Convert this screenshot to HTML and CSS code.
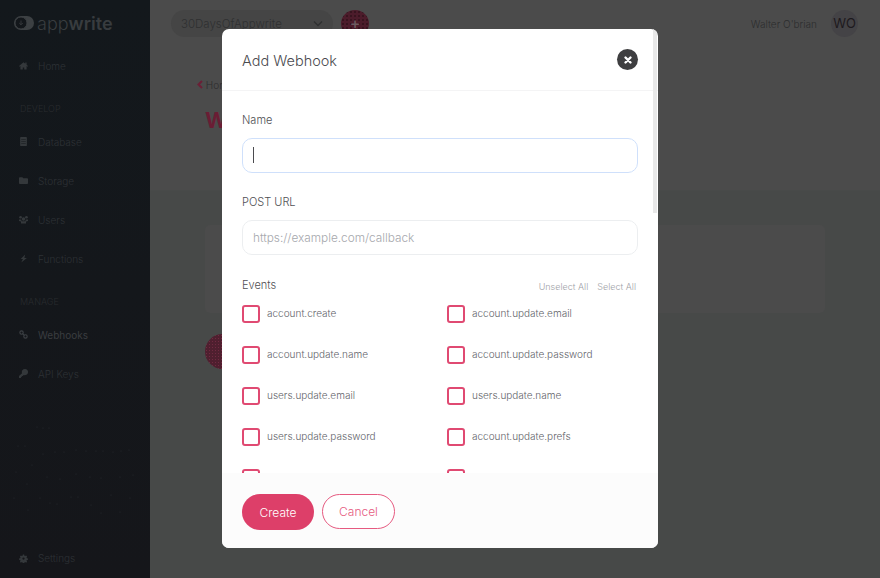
FILE: index.html
```html
<!DOCTYPE html>
<html lang="en">
<head>
    <meta charset="UTF-8">
    <meta name="viewport" content="width=device-width, initial-scale=1.0">
    <title>Webhooks - Appwrite</title>
    <link rel="stylesheet" href="styles.css">
</head>
<body>
    <aside class="sidebar">
        <div class="logo">
            <svg class="logo-mark" width="20" height="14" viewBox="0 0 20 14"><rect x="0" y="0" width="20" height="14" rx="7" fill="#3c4043"/><circle cx="7" cy="7" r="6" fill="#13171b" stroke="#3c4043"/><path d="M7 4.500v4M5.200 7l1.800 1.800L8.800 7" fill="none" stroke="#3c4043" stroke-width=".8"/></svg>
            <span>app<b>write</b></span>
        </div>
        <nav class="nav">
            <a class="nav-item"><svg viewBox="0 0 16 16"><path d="M8 2 0 9l1 1.200 1.500-1.200v6h4.200v-3.500h2.600V15h4.200V9l1.500 1.200L16 9l-2.500-2.200V2.500h-2.300v2.300z"/></svg>Home</a>
            <div class="nav-title">DEVELOP</div>
            <a class="nav-item"><svg viewBox="0 0 16 16"><path d="M3.500 0h9A1.500 1.500 0 0 1 14 1.500v13a1.500 1.500 0 0 1-1.500 1.500h-9A1.500 1.500 0 0 1 2 14.500v-13A1.500 1.500 0 0 1 3.500 0zM4 4v1h8V4zm0 3.500v1h8v-1zm0 3.500v1h8v-1z"/></svg>Database</a>
            <a class="nav-item"><svg viewBox="0 0 16 16"><path d="M0 3.500A1.500 1.500 0 0 1 1.500 2H6l1.500 2h7A1.500 1.500 0 0 1 16 5.500v7a1.500 1.500 0 0 1-1.500 1.500h-13A1.500 1.500 0 0 1 0 12.500z"/></svg>Storage</a>
            <a class="nav-item"><svg viewBox="0 0 16 16"><circle cx="8" cy="7" r="3.200"/><circle cx="2.800" cy="4" r="2.400"/><circle cx="13.200" cy="4" r="2.400"/><path d="M0 8h3.500L5 11h6l1.500-3H16v2.500l-3.500 1V15h-9v-3.500l-3.500-1z"/></svg>Users</a>
            <a class="nav-item"><svg viewBox="0 0 16 16"><path d="M11 1 3 9h4l-3 6 10-8H9.500z"/></svg>Functions</a>
            <div class="nav-title nav-title-manage">MANAGE</div>
            <a class="nav-item active"><svg viewBox="0 0 16 16" fill="none" stroke="#3d4145" stroke-width="2"><circle cx="4.500" cy="4.500" r="3"/><circle cx="11.500" cy="11.500" r="3"/><path d="M6.500 6.500l3 3"/></svg>Webhooks</a>
            <a class="nav-item"><svg viewBox="0 0 16 16"><path d="M10.500 0a5.500 5.500 0 1 1-2 10.600L6.500 12.500H5v1.500H3.500v2H0v-3.500l5.400-5A5.500 5.500 0 0 1 10.500 0z"/></svg>API Keys</a>
        </nav>
        <svg class="specks" width="150" height="100" viewBox="0 0 150 100" fill="#2c2f33">
            <circle cx="37" cy="2" r=".5"/><circle cx="43" cy="3" r=".5"/><circle cx="49" cy="3" r=".5"/>
            <circle cx="18" cy="21" r=".5"/><circle cx="25" cy="21" r=".5"/><circle cx="43" cy="29" r=".5"/><circle cx="55" cy="27" r=".5"/><circle cx="64" cy="27" r=".5"/><circle cx="76" cy="25" r=".5"/><circle cx="86" cy="26" r=".5"/><circle cx="96" cy="26" r=".5"/><circle cx="103" cy="26" r=".5"/><circle cx="113" cy="27" r=".5"/><circle cx="121" cy="26" r=".5"/><circle cx="129" cy="25" r=".5"/>
            <circle cx="32" cy="40" r=".5"/><circle cx="16" cy="47" r=".5"/><circle cx="47" cy="52" r=".5"/><circle cx="76" cy="49" r=".5"/><circle cx="60" cy="54" r=".5"/><circle cx="90" cy="52" r=".5"/><circle cx="101" cy="53" r=".5"/><circle cx="120" cy="52" r=".5"/><circle cx="133" cy="50" r=".5"/>
            <circle cx="27" cy="59" r=".5"/><circle cx="14" cy="73" r=".5"/><circle cx="40" cy="73" r=".5"/><circle cx="50" cy="78" r=".5"/><circle cx="57" cy="79" r=".5"/><circle cx="71" cy="72" r=".5"/><circle cx="78" cy="72" r=".5"/><circle cx="111" cy="70" r=".5"/><circle cx="130" cy="73" r=".5"/><circle cx="91" cy="80" r=".5"/><circle cx="28" cy="85" r=".5"/><circle cx="101" cy="88" r=".5"/><circle cx="120" cy="87" r=".5"/>
        </svg>
        <a class="nav-item settings"><svg viewBox="0 0 16 16"><path d="M6.800 1h2.400l.4 2 1.300.6 1.800-1 1.700 1.700-1 1.800.5 1.300 2.100.4v2.400l-2.100.4-.5 1.300 1 1.800-1.700 1.700-1.800-1-1.300.5-.4 2.100H6.800l-.4-2.100-1.300-.5-1.800 1-1.700-1.700 1-1.800-.5-1.300-2.100-.4V7.800l2.100-.4.500-1.300-1-1.800 1.700-1.700 1.800 1 1.300-.6zM8 6a2 2 0 1 0 0 4 2 2 0 0 0 0-4z"/></svg>Settings</a>
    </aside>

    <main class="main">
        <div class="head">
            <div class="topbar">
                <div class="project-select">
                    <span>30DaysOfAppwrite</span>
                    <svg width="12" height="8" viewBox="0 0 12 8" fill="none" stroke="#2f3031" stroke-width="1.300"><path d="M2 1.500l4 4 4-4"/></svg>
                </div>
                <div class="add-project">+</div>
                <div class="user-name">Walter O'brian</div>
                <div class="avatar">WO</div>
            </div>
            <div class="crumb">
                <svg width="6" height="9" viewBox="0 0 6 9" fill="none" stroke="#6b1f36" stroke-width="2"><path d="M5 1 1.500 4.500 5 8"/></svg>
                Home
            </div>
            <h1>Webhooks</h1>
        </div>
        <div class="card"></div>
        <div class="empty-circle"></div>
    </main>

    <div class="modal">
        <div class="modal-head">
            <h2>Add Webhook</h2>
            <button class="close"><svg width="10" height="10" viewBox="0 0 10 10" stroke="#fff" stroke-width="2.400" stroke-linecap="round"><path d="M2.500 2.500l5 5M7.500 2.500l-5 5"/></svg></button>
        </div>
        <div class="modal-body">
            <label class="field-label">Name</label>
            <div class="input-wrap">
                <input class="input input-focus" type="text">
                <span class="caret"></span>
            </div>
            <label class="field-label">POST URL</label>
            <div class="input-wrap">
                <input class="input" type="text" placeholder="https://example.com/callback">
            </div>
            <div class="events-head">
                <label class="field-label">Events</label>
                <div class="events-links"><span>Unselect All</span><span>Select All</span></div>
            </div>
            <div class="events">
                <div class="event"><span class="check"></span>account.create</div>
                <div class="event"><span class="check"></span>account.update.email</div>
                <div class="event"><span class="check"></span>account.update.name</div>
                <div class="event"><span class="check"></span>account.update.password</div>
                <div class="event"><span class="check"></span>users.update.email</div>
                <div class="event"><span class="check"></span>users.update.name</div>
                <div class="event"><span class="check"></span>users.update.password</div>
                <div class="event"><span class="check"></span>account.update.prefs</div>
                <div class="event"><span class="check"></span>account.sessions.create</div>
                <div class="event"><span class="check"></span>account.sessions.delete</div>
            </div>
        </div>
        <div class="modal-foot">
            <button class="btn btn-primary">Create</button>
            <button class="btn btn-outline">Cancel</button>
        </div>
        <div class="scroll-thumb"></div>
    </div>
</body>
</html>
```

FILE: styles.css
```css
* {
    box-sizing: border-box;
}
html, body {
    height: 100%;
}
body {
    margin: 0;
    display: flex;
    overflow: hidden;
    font-family: Inter, "Open Sans", "Liberation Sans", sans-serif;
    font-weight: 300;
    background-color: #474948;
    color: #4b4b4f;
}

/* sidebar */
.sidebar {
    position: relative;
    width: 150px;
    height: 578px;
    flex-shrink: 0;
    background: linear-gradient(#13181c, #15161a);
    color: #2d3135;
    font-size: 10px;
}
.logo {
    display: flex;
    align-items: center;
    height: 46px;
    padding-left: 14px;
    gap: 3px;
    font-size: 18px;
    color: #383c3f;
}
.logo b {
    font-weight: 600;
}
.nav {
    display: flex;
    flex-direction: column;
}
.nav-item {
    display: flex;
    align-items: center;
    height: 39px;
    padding-left: 18.500px;
    gap: 10.500px;
}
.nav-item svg {
    width: 9px;
    height: 9px;
    fill: #34383b;
}
.nav-item.active {
    color: #3a3d40;
    font-weight: 400;
}
.nav-item.active svg {
    fill: none;
}
.nav-title {
    margin: 18px 0 7px 20px;
    font-size: 9px;
    line-height: 12px;
    color: #282b2e;
}
.nav-title-manage {
    margin-top: 18px;
    margin-bottom: 7px;
}
.specks {
    position: absolute;
    left: 0;
    top: 425px;
}
.settings {
    position: absolute;
    left: 0;
    bottom: 0;
    height: 40px;
}

/* page behind the modal */
.main {
    flex: 1;
}
.head {
    height: 191px;
    background-color: #4b4b4b;
    border-bottom: 1px solid #484a49;
    padding: 10px 22px 0 21px;
}
.topbar {
    display: flex;
    align-items: center;
    height: 27px;
}
.project-select {
    display: flex;
    align-items: center;
    justify-content: space-between;
    width: 162px;
    height: 27px;
    padding: 0 9px 0 10px;
    border-radius: 14px;
    background-color: #454545;
    color: #2f3031;
    font-size: 11.500px;
}
.add-project {
    width: 28px;
    height: 27px;
    margin-left: 8px;
    border-radius: 50%;
    background-color: #4c1c2b;
    background-image: radial-gradient(#38141f 30%, transparent 35%);
    background-size: 4px 4px;
    color: #6d5a60;
    font-size: 16px;
    font-weight: 500;
    line-height: 26px;
    text-align: center;
}
.user-name {
    margin-left: auto;
    font-size: 10px;
    color: #2c2d2e;
}
.avatar {
    width: 27px;
    height: 27px;
    margin-left: 14px;
    border-radius: 50%;
    background-color: #444346;
    color: #1d191d;
    font-size: 13px;
    font-weight: 400;
    line-height: 27px;
    text-align: center;
}
.crumb {
    margin: 42px 0 0 26px;
    font-size: 10px;
    color: #2e2c2e;
}
h1 {
    margin: 16px 0 0 34px;
    font-size: 22px;
    font-weight: 700;
    color: #6a1d34;
}
.card {
    width: 620px;
    height: 88px;
    margin: 34px 0 0 55px;
    border-radius: 5px;
    background-color: #4b4b4b;
}
.empty-circle {
    width: 35px;
    height: 35px;
    margin: 21px 0 0 55px;
    border-radius: 50%;
    background-color: #4f1f2f;
    background-image: radial-gradient(#702a41 30%, transparent 35%);
    background-size: 3px 3px;
}

/* modal */
.modal {
    position: absolute;
    left: 222px;
    top: 29px;
    display: flex;
    flex-direction: column;
    width: 436px;
    height: 519px;
    overflow: hidden;
    border-radius: 7px;
    background-color: #ffffff;
}
.modal-head {
    display: flex;
    align-items: center;
    justify-content: space-between;
    flex-shrink: 0;
    height: 62px;
    padding: 0 20px;
    border-bottom: 1px solid #f4f4f5;
}
.modal-head h2 {
    margin: 0;
    padding-top: 2px;
    font-size: 14.500px;
    font-weight: 300;
    color: #4b4b4f;
}
.close {
    display: flex;
    align-items: center;
    justify-content: center;
    width: 21px;
    height: 21px;
    padding: 0;
    border: none;
    border-radius: 50%;
    background-color: #3e3e40;
}
.modal-body {
    flex: 1;
    overflow: hidden;
    padding: 19px 20px 0;
}
.field-label {
    display: block;
    height: 18px;
    margin-bottom: 10px;
    font-size: 11px;
    line-height: 20px;
    color: #4f4f53;
}
.input-wrap {
    position: relative;
    margin-bottom: 19px;
}
.input {
    display: block;
    width: 100%;
    height: 35px;
    padding: 0 10px;
    border: 1px solid #eceef0;
    border-radius: 10px;
    outline: none;
    font-family: inherit;
    font-size: 11.800px;
    font-weight: 300;
}
.input::placeholder {
    color: #a6a8ad;
}
.input-focus {
    border-color: #cfe0fb;
}
.caret {
    position: absolute;
    left: 11px;
    top: 9px;
    width: 1px;
    height: 16px;
    background-color: #4b4b4f;
}
.events-head {
    display: flex;
    justify-content: space-between;
    margin-top: 20px;
}
.events-links {
    display: flex;
    gap: 9px;
    padding: 5px 2px 0 0;
    font-size: 9px;
    line-height: 14px;
    color: #a0a2a8;
}
.events {
    display: grid;
    grid-template-columns: 205px 1fr;
    grid-auto-rows: 41px;
    margin-top: 2px;
}
.event {
    display: flex;
    align-items: flex-start;
    gap: 7px;
    font-size: 10px;
    line-height: 16px;
    color: #63646a;
}
.check {
    width: 18px;
    height: 18px;
    flex-shrink: 0;
    border: 2px solid #e04a72;
    border-radius: 3px;
}
.modal-foot {
    display: flex;
    align-items: flex-start;
    gap: 8px;
    flex-shrink: 0;
    height: 75px;
    padding: 21px 20px 0;
    background-color: #fcfcfc;
}
.btn {
    padding: 0;
    border-radius: 18px;
    font-family: inherit;
    font-size: 12px;
    font-weight: 300;
}
.btn-primary {
    width: 72px;
    height: 36px;
    border: none;
    background-color: #dd3f69;
    color: #ffffff;
}
.btn-outline {
    width: 73px;
    height: 35px;
    border: 1.500px solid #e65a80;
    background-color: #ffffff;
    color: #e65a80;
}
.scroll-thumb {
    position: absolute;
    right: 1px;
    top: 0;
    width: 4px;
    height: 184px;
    background-color: #e8e8e8;
}
```
